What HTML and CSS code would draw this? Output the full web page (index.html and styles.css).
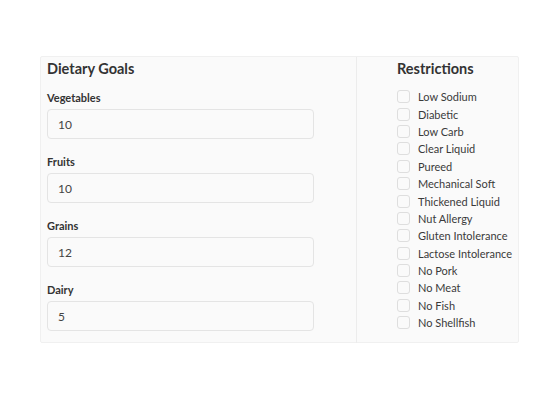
FILE: index.html
```html
<!DOCTYPE html>
<html lang="en">
<head>
  <meta charset="UTF-8">
  <title>Dietary Settings</title>
  <meta name="viewport" content="width=device-width, initial-scale=1.0">
  <link rel="stylesheet" href="styles.css">
</head>
<body>

<div class="card">
  <div class="goals">
    <h2>Dietary Goals</h2>
    <div class="field">
      <label>Vegetables</label>
      <input type="text" value="10">
    </div>
    <div class="field">
      <label>Fruits</label>
      <input type="text" value="10">
    </div>
    <div class="field">
      <label>Grains</label>
      <input type="text" value="12">
    </div>
    <div class="field">
      <label>Dairy</label>
      <input type="text" value="5">
    </div>
  </div>

  <div class="restrictions">
    <h2>Restrictions</h2>
    <ul class="checks">
      <li><span class="box"></span>Low Sodium</li>
      <li><span class="box"></span>Diabetic</li>
      <li><span class="box"></span>Low Carb</li>
      <li><span class="box"></span>Clear Liquid</li>
      <li><span class="box"></span>Pureed</li>
      <li><span class="box"></span>Mechanical Soft</li>
      <li><span class="box"></span>Thickened Liquid</li>
      <li><span class="box"></span>Nut Allergy</li>
      <li><span class="box"></span>Gluten Intolerance</li>
      <li><span class="box"></span>Lactose Intolerance</li>
      <li><span class="box"></span>No Pork</li>
      <li><span class="box"></span>No Meat</li>
      <li><span class="box"></span>No Fish</li>
      <li><span class="box"></span>No Shellfish</li>
    </ul>
  </div>
</div>

</body>
</html>
```

FILE: styles.css
```css
body {
  font-family: Lato, 'Noto Sans', sans-serif;
  margin: 0;
  padding: 0;
  background: #ffffff;
  color: #333333;
}

.card {
  margin: 56px 0 0 40px;
  width: 479px;
  height: 287px;
  box-sizing: border-box;
  background: #fafafa;
  border: 1px solid #f0f0f0;
  border-radius: 2px;
  display: grid;
  grid-template-columns: 315px 1fr;
}

h2 {
  margin: 0;
  font-size: 14.5px;
  line-height: 20px;
  font-weight: 700;
  color: #333;
}

.goals {
  padding: 2px 6px 0;
}

.goals h2 {
  margin-bottom: 12px;
}

.field {
  margin-bottom: 16px;
}

.field label {
  display: block;
  font-size: 11px;
  line-height: 14px;
  font-weight: 700;
  margin-bottom: 4px;
}

.field input {
  display: block;
  box-sizing: border-box;
  width: 267px;
  height: 30px;
  padding: 0 10px;
  font-family: inherit;
  font-size: 12px;
  color: #444;
  background: #fafafa;
  border: 1px solid #e4e4e4;
  border-radius: 4px;
  outline: none;
}

.restrictions {
  border-left: 1px solid #ececec;
  margin-bottom: 3px;
  padding: 2px 0 0 40px;
}

.restrictions h2 {
  margin-bottom: 9px;
}

.checks {
  list-style: none;
  margin: 0;
  padding: 0;
}

.checks li {
  display: flex;
  align-items: center;
  height: 17.4px;
  font-size: 11px;
  color: #3a3a3a;
}

.box {
  width: 13px;
  height: 13px;
  box-sizing: border-box;
  border: 1px solid #dedede;
  border-radius: 3px;
  background: #fafafa;
  margin-right: 8px;
}
```
